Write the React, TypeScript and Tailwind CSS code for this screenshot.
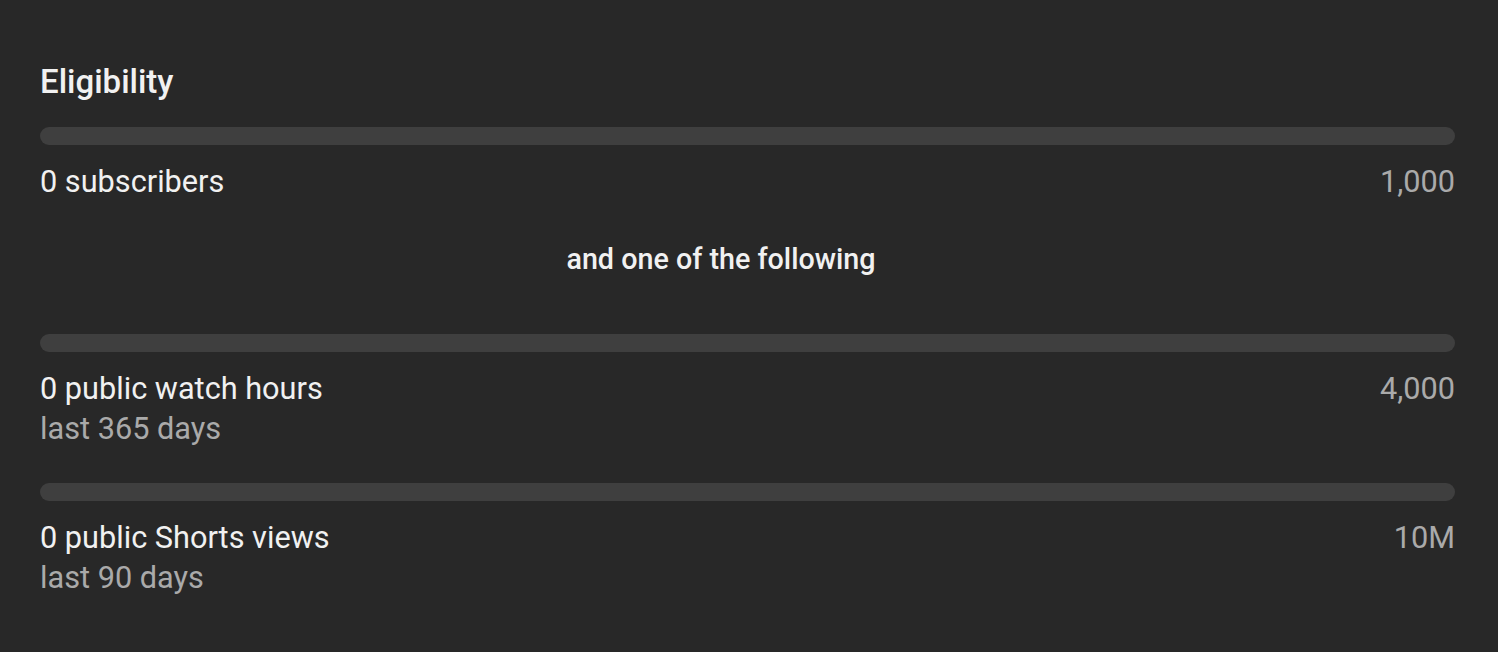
import React from 'react';

const Bar: React.FC = () => <div className="h-[18px] w-full rounded-full bg-[#3f3f3f]" />;

const Eligibility: React.FC = () => {
  return (
    <div
      className="h-[652px] w-full bg-[#282828] pl-[40px] pr-[43px] pt-[62px] text-[#f1f1f1]"
      style={{ fontFamily: 'Roboto, "Noto Sans", sans-serif' }}
    >
      <h2 className="text-[33px] font-medium leading-[40px]">Eligibility</h2>

      {/* subscribers */}
      <div className="mt-[25px]">
        <Bar />
      </div>
      <div className="mt-[17px] flex justify-between text-[30.7px] leading-[40px]">
        <span>0 subscribers</span>
        <span className="text-[#aaaaaa]">1,000</span>
      </div>

      <p className="mt-[37px] pr-[53px] text-center text-[28.7px] font-medium leading-[40px]">
        and one of the following
      </p>

      {/* watch hours */}
      <div className="mt-[55px]">
        <Bar />
      </div>
      <div className="mt-[17px] flex justify-between text-[30.7px] leading-[40px]">
        <div>
          <div>0 public watch hours</div>
          <div className="text-[#aaaaaa]">last 365 days</div>
        </div>
        <span className="text-[#aaaaaa]">4,000</span>
      </div>

      {/* shorts views */}
      <div className="mt-[34px]">
        <Bar />
      </div>
      <div className="mt-[17px] flex justify-between text-[30.7px] leading-[40px]">
        <div>
          <div>0 public Shorts views</div>
          <div className="leading-[39px] text-[#aaaaaa]">last 90 days</div>
        </div>
        <span className="text-[#aaaaaa]">10M</span>
      </div>
    </div>
  );
};

export default function App() {
  return <Eligibility />;
}
